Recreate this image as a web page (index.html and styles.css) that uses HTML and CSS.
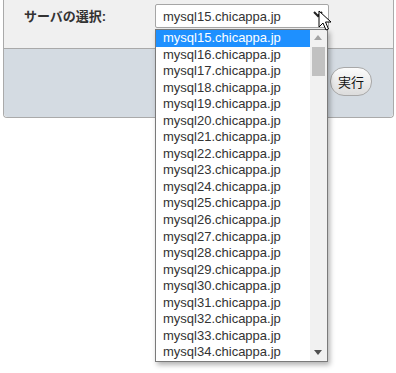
FILE: index.html
```html
<!DOCTYPE html>
<html lang="ja">
<head>
  <meta charset="UTF-8" />
  <title>サーバの選択</title>
  <link rel="stylesheet" href="styles.css">
</head>
<body>
  <div class="panel">
    <div class="panel-top">
      <label class="field-label">サーバの選択:</label>
      <div class="select-wrap">
        <div class="select-box">
          <span>mysql15.chicappa.jp</span>
          <svg class="chevron" width="10" height="7" viewBox="0 0 10 7"><path d="M1 1 L5 5 L9 1" fill="none" stroke="#222" stroke-width="2"/></svg>
        </div>
        <div class="dropdown">
          <div class="options" id="options"></div>
          <div class="scrollbar">
            <div class="arrow up"></div>
            <div class="thumb"></div>
            <div class="arrow down"></div>
          </div>
        </div>
        <svg class="cursor" width="14" height="22" viewBox="0 0 14 22">
          <path d="M1 1 L1 17 L5 13 L8 20 L10.5 19 L7.5 12 L13 12 Z" fill="#fff" stroke="#000" stroke-width="1" stroke-linejoin="round"/>
        </svg>
      </div>
    </div>
    <div class="panel-bottom">
      <button class="run-btn">実行</button>
    </div>
  </div>

  <script>
    const list = document.getElementById("options");
    for (let i = 15; i <= 34; i++) {
      const opt = document.createElement("div");
      opt.className = i === 15 ? "option selected" : "option";
      opt.innerText = `mysql${i}.chicappa.jp`;
      list.appendChild(opt);
    }
  </script>
</body>
</html>
```

FILE: styles.css
```css
html, body {
  height: 100%;
}
body {
  margin: 0;
  min-height: 373px;
  background: #fff;
  font-family: "Liberation Sans", Arial, "Noto Sans CJK JP", sans-serif;
  font-size: 13px;
  color: #333;
}
.panel {
  margin-left: 3px;
  width: 389px;
  border: 1px solid #aaa;
  border-top: none;
  border-radius: 0 0 4px 4px;
}
.panel-top {
  background: #f0f0f0;
  height: 48px;
  border-bottom: 1px solid #a9a9a9;
  display: flex;
  align-items: flex-start;
}
.field-label {
  font-weight: bold;
  font-size: 13px;
  margin: 6px 0 0 20px;
  width: 131px;
  color: #333;
}
.select-wrap {
  position: relative;
  margin-top: 4px;
}
.select-box {
  height: 22px;
  width: 160px;
  border: 1px solid #a6a6a6;
  border-radius: 2px;
  background: #fff;
  display: flex;
  align-items: center;
  justify-content: space-between;
  padding: 0 5px 0 7px;
  color: #333;
}
.chevron {
  margin-top: -4px;
}
.dropdown {
  position: absolute;
  top: 25px;
  left: 0;
  width: 171px;
  height: 331px;
  border: 1px solid #7a7a7a;
  background: #fff;
  box-shadow: 2px 3px 5px rgba(0, 0, 0, 0.3);
  display: flex;
  z-index: 10;
}
.options {
  flex: 1;
  overflow: hidden;
}
.option {
  height: 16.55px;
  line-height: 16px;
  padding-left: 7px;
  color: #333;
  white-space: nowrap;
}
.option.selected {
  background: #1e90ff;
  color: #fff;
}
.scrollbar {
  width: 17px;
  background: #f1f1f1;
  position: relative;
}
.thumb {
  position: absolute;
  top: 17px;
  left: 2px;
  width: 13px;
  height: 29px;
  background: #c1c1c1;
}
.arrow {
  position: absolute;
  left: 4px;
  width: 0;
  height: 0;
  border-left: 4.5px solid transparent;
  border-right: 4.5px solid transparent;
}
.arrow.up {
  top: 5px;
  border-bottom: 5px solid #a3a3a3;
}
.arrow.down {
  bottom: 6px;
  border-top: 5px solid #505050;
}
.cursor {
  position: absolute;
  left: 163px;
  top: 6px;
  z-index: 20;
}
.panel-bottom {
  background: #d4dbe2;
  height: 68px;
  border-radius: 0 0 4px 4px;
  display: flex;
  justify-content: flex-end;
  align-items: center;
  padding-right: 21px;
}
.run-btn {
  font-family: "Noto Sans CJK JP", sans-serif;
  font-size: 13px;
  color: #111;
  width: 42px;
  height: 29px;
  padding: 0;
  border: 1px solid #a8a8a8;
  border-radius: 14px;
  background: linear-gradient(#fbfbfb, #dcdcdc);
  margin-top: -3px;
}
```
